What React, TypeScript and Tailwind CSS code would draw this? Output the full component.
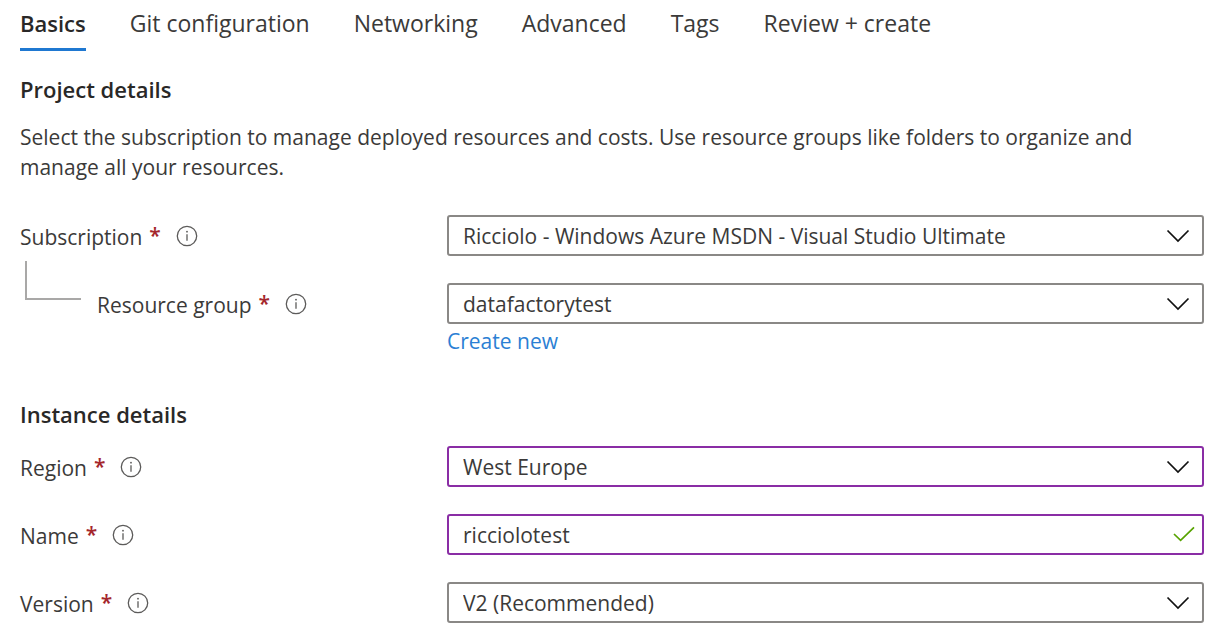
import { useState } from 'react';
import type { ReactNode } from 'react';
import clsx from 'clsx';

const tabs = [
  'Basics',
  'Git configuration',
  'Networking',
  'Advanced',
  'Tags',
  'Review + create',
];

const InfoIcon = () => (
  <svg className="size-[22px]" viewBox="0 0 22 22" fill="none" aria-hidden="true">
    <circle cx="11" cy="11" r="9.7" stroke="#5c5b5a" strokeWidth="1.3" />
    <path d="M11 9.2v6.6" stroke="#5c5b5a" strokeWidth="1.3" />
    <circle cx="11" cy="6.7" r="0.9" fill="#5c5b5a" />
  </svg>
);

const ChevronIcon = () => (
  <svg
    className="pointer-events-none absolute top-[14px] right-[14px] h-[14px] w-6"
    viewBox="0 0 24 14"
    fill="none"
    aria-hidden="true"
  >
    <path d="M1.5 1.5 12 12 22.5 1.5" stroke="#111" strokeWidth="1.7" />
  </svg>
);

const CheckIcon = () => (
  <svg
    className="pointer-events-none absolute top-3 right-[9px] h-4 w-[22px]"
    viewBox="0 0 22 16"
    fill="none"
    aria-hidden="true"
  >
    <path d="M1 8 7.6 14.3 21 1.4" stroke="#57a300" strokeWidth="1.7" />
  </svg>
);

type RowProps = {
  id: string;
  label: string;
  nested?: boolean;
  children: ReactNode;
};

const FormRow = ({ id, label, nested, children }: RowProps) => (
  <div className="flex items-start">
    <div className="flex h-[41px] w-[427px] shrink-0 items-center">
      {nested && (
        <span className="-mt-[22px] mr-4 ml-[5px] h-[39px] w-14 self-start border-b-2 border-l-2 border-[#a9a8a7]" />
      )}
      <label htmlFor={id} className="flex pt-[2px]">
        {label}
        <span className="-mt-[2px] ml-[7px] font-semibold text-[#a4262c]">*</span>
      </label>
      <button type="button" aria-label={`About ${label}`} className="ml-[15px]">
        <InfoIcon />
      </button>
    </div>
    <div className="min-w-0 grow">{children}</div>
  </div>
);

type SelectProps = {
  id: string;
  options: string[];
  edited?: boolean;
};

const SelectBox = ({ id, options, edited }: SelectProps) => (
  <div className="relative">
    <select
      id={id}
      className={clsx(
        'h-[41px] w-full appearance-none rounded-[3px] border-2 bg-white pr-12 pl-[14px]',
        edited ? 'border-[#8a2da5]' : 'border-[#8a8886]',
      )}
    >
      {options.map((option) => (
        <option key={option}>{option}</option>
      ))}
    </select>
    <ChevronIcon />
  </div>
);

const App = () => {
  const [active, setActive] = useState('Basics');
  const [name, setName] = useState('ricciolotest');

  return (
    <main className="bg-white pr-[13px] pb-4 pl-5 font-['Open_Sans','Noto_Sans',sans-serif] text-[21px] leading-[30px] text-[#3b3a39]">
      <nav className="flex gap-11 pt-2" role="tablist">
        {tabs.map((tab) => (
          <button
            key={tab}
            type="button"
            role="tab"
            aria-selected={active === tab}
            onClick={() => setActive(tab)}
            className={clsx(
              'border-b-3 pb-[10px] leading-[30px] whitespace-nowrap',
              active === tab
                ? 'border-[#1f78d1] text-[22px] font-semibold text-[#292827]'
                : 'border-transparent text-[23px]',
            )}
          >
            {tab}
          </button>
        ))}
      </nav>

      <section className="pt-[23px]">
        <h2 className="text-[22px] leading-[30px] font-semibold text-[#292827]">
          Project details
        </h2>
        <p className="mt-[18px]">
          Select the subscription to manage deployed resources and costs. Use
          resource groups like folders to organize and manage all your
          resources.
        </p>
        <div className="mt-[33px] flex flex-col gap-[27px]">
          <FormRow id="subscription" label="Subscription">
            <SelectBox
              id="subscription"
              options={['Ricciolo - Windows Azure MSDN - Visual Studio Ultimate']}
            />
          </FormRow>
          <FormRow id="resource-group" label="Resource group" nested>
            <SelectBox id="resource-group" options={['datafactorytest']} />
            <a href="#create" className="mt-[2px] inline-block text-[#2b7fd4]">
              Create new
            </a>
          </FormRow>
        </div>
      </section>

      <section className="pt-[43px]">
        <h2 className="text-[22px] leading-[30px] font-semibold text-[#292827]">
          Instance details
        </h2>
        <div className="mt-[17px] flex flex-col gap-[27px]">
          <FormRow id="region" label="Region">
            <SelectBox id="region" options={['West Europe']} edited />
          </FormRow>
          <FormRow id="name" label="Name">
            <div className="relative">
              <input
                id="name"
                type="text"
                value={name}
                onChange={(e) => setName(e.target.value)}
                className="h-[41px] w-full rounded-[3px] border-2 border-[#8a2da5] bg-white pr-12 pl-[14px]"
              />
              <CheckIcon />
            </div>
          </FormRow>
          <FormRow id="version" label="Version">
            <SelectBox id="version" options={['V2 (Recommended)', 'V1']} />
          </FormRow>
        </div>
      </section>
    </main>
  );
};

export default App;
